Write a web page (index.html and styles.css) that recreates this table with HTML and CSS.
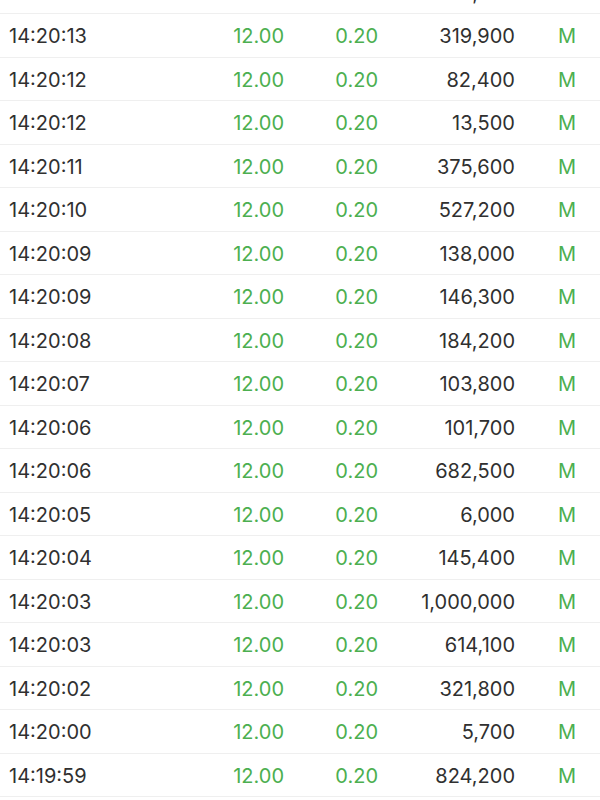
FILE: index.html
```html
<!DOCTYPE html>
<html>
<head>
<meta charset="utf-8">
<link rel="stylesheet" href="styles.css">
</head>
<body>
<div class="list">
  <div class="row"><span class="time">14:20:14</span><span class="price">12.00</span><span class="chg">0.20</span><span class="vol">210,300</span><span class="type">M</span></div>
  <div class="row"><span class="time">14:20:13</span><span class="price">12.00</span><span class="chg">0.20</span><span class="vol">319,900</span><span class="type">M</span></div>
  <div class="row"><span class="time">14:20:12</span><span class="price">12.00</span><span class="chg">0.20</span><span class="vol">82,400</span><span class="type">M</span></div>
  <div class="row"><span class="time">14:20:12</span><span class="price">12.00</span><span class="chg">0.20</span><span class="vol">13,500</span><span class="type">M</span></div>
  <div class="row"><span class="time">14:20:11</span><span class="price">12.00</span><span class="chg">0.20</span><span class="vol">375,600</span><span class="type">M</span></div>
  <div class="row"><span class="time">14:20:10</span><span class="price">12.00</span><span class="chg">0.20</span><span class="vol">527,200</span><span class="type">M</span></div>
  <div class="row"><span class="time">14:20:09</span><span class="price">12.00</span><span class="chg">0.20</span><span class="vol">138,000</span><span class="type">M</span></div>
  <div class="row"><span class="time">14:20:09</span><span class="price">12.00</span><span class="chg">0.20</span><span class="vol">146,300</span><span class="type">M</span></div>
  <div class="row"><span class="time">14:20:08</span><span class="price">12.00</span><span class="chg">0.20</span><span class="vol">184,200</span><span class="type">M</span></div>
  <div class="row"><span class="time">14:20:07</span><span class="price">12.00</span><span class="chg">0.20</span><span class="vol">103,800</span><span class="type">M</span></div>
  <div class="row"><span class="time">14:20:06</span><span class="price">12.00</span><span class="chg">0.20</span><span class="vol">101,700</span><span class="type">M</span></div>
  <div class="row"><span class="time">14:20:06</span><span class="price">12.00</span><span class="chg">0.20</span><span class="vol">682,500</span><span class="type">M</span></div>
  <div class="row"><span class="time">14:20:05</span><span class="price">12.00</span><span class="chg">0.20</span><span class="vol">6,000</span><span class="type">M</span></div>
  <div class="row"><span class="time">14:20:04</span><span class="price">12.00</span><span class="chg">0.20</span><span class="vol">145,400</span><span class="type">M</span></div>
  <div class="row"><span class="time">14:20:03</span><span class="price">12.00</span><span class="chg">0.20</span><span class="vol">1,000,000</span><span class="type">M</span></div>
  <div class="row"><span class="time">14:20:03</span><span class="price">12.00</span><span class="chg">0.20</span><span class="vol">614,100</span><span class="type">M</span></div>
  <div class="row"><span class="time">14:20:02</span><span class="price">12.00</span><span class="chg">0.20</span><span class="vol">321,800</span><span class="type">M</span></div>
  <div class="row"><span class="time">14:20:00</span><span class="price">12.00</span><span class="chg">0.20</span><span class="vol">5,700</span><span class="type">M</span></div>
  <div class="row"><span class="time">14:19:59</span><span class="price">12.00</span><span class="chg">0.20</span><span class="vol">824,200</span><span class="type">M</span></div>
  <div class="row"><span class="time">14:19:58</span><span class="price">12.00</span><span class="chg">0.20</span><span class="vol">97,100</span><span class="type">M</span></div>
</div>
</body>
</html>
```

FILE: styles.css
```css
html, body {
  margin: 0;
  padding: 0;
  background: #ffffff;
  overflow: hidden;
}
body {
  font-family: Inter, "Noto Sans", "Liberation Sans", sans-serif;
  font-size: 20px;
  color: #303030;
}
.list {
  margin-top: -29.5px;
}
.row {
  display: grid;
  grid-template-columns: 180px 95px 94px 137px 1fr;
  align-items: center;
  height: 43.5px;
  box-sizing: border-box;
  border-bottom: 1px solid #efefef;
  padding-left: 9px;
  padding-top: 2px;
}
.time {
  text-align: left;
}
.price, .chg {
  text-align: right;
  color: #4caf50;
}
.vol {
  text-align: right;
}
.type {
  text-align: center;
  padding-left: 19px;
  color: #4caf50;
}
```
